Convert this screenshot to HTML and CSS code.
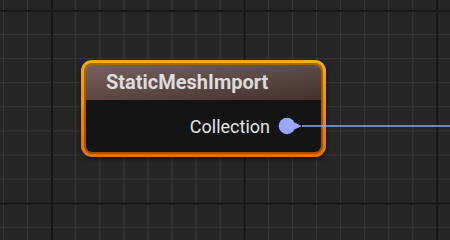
FILE: index.html
```html
<!DOCTYPE html>
<html lang="en">
<head>
    <meta charset="UTF-8">
    <title>StaticMeshImport</title>
    <link rel="stylesheet" href="styles.css">
</head>
<body>

    <div class="graph">

        <!-- Node -->
        <div class="node">
            <div class="node-inner">
                <div class="node-title">StaticMeshImport</div>
                <div class="node-body">
                    <div class="pin-row">
                        <span class="pin-label">Collection</span>
                        <svg class="pin" width="24" height="18" viewBox="0 0 24 18">
                            <circle cx="9" cy="9" r="8.3" fill="#9ba6ff"/>
                            <path d="M16.5 5.5 L23.5 9 L16.5 12.5 Z" fill="#9ba6ff"/>
                        </svg>
                    </div>
                </div>
            </div>
        </div>

        <!-- Wire going out of the Collection pin -->
        <svg class="wire" width="148" height="4" viewBox="0 0 148 4">
            <line x1="0" y1="2" x2="148" y2="2" stroke="#8eaae6" stroke-width="1.6"/>
        </svg>

    </div>

</body>
</html>
```

FILE: styles.css
```css
        body {
            margin: 0;
            padding: 0;
            font-family: Roboto, "Liberation Sans", sans-serif;
        }

        /* Graph canvas with minor and major grid lines */
        .graph {
            position: relative;
            width: 450px;
            height: 240px;
            overflow: hidden;
            background-color: #262626;
            background-image:
                linear-gradient(to right, #161616 2px, transparent 2px),
                linear-gradient(to bottom, #161616 2px, transparent 2px),
                linear-gradient(to right, #38383a 1px, transparent 1px),
                linear-gradient(to bottom, #38383a 1px, transparent 1px);
            background-size: 192.6px 192.6px, 192.6px 192.6px, 24.08px 24.08px, 24.08px 24.08px;
            background-position: 51px 0, 0 10px, 3px 0, 0 10px;
        }

        .node {
            position: absolute;
            left: 81px;
            top: 60px;
            width: 245px;
            padding: 5px;
            box-sizing: border-box;
            border-radius: 11px;
            background: linear-gradient(#f4b00a, #ec8c08 55%, #e07406);
            box-shadow: 0 2px 5px rgba(0, 0, 0, 0.55);
        }

        .node-inner {
            border-radius: 6px;
            box-shadow: 0 0 0 2px rgba(130, 60, 0, 0.65);
            overflow: hidden;
        }

        .node-title {
            height: 35px;
            line-height: 34px;
            padding-left: 20px;
            font-size: 20px;
            font-weight: bold;
            color: #dcdcdc;
            background:
                linear-gradient(rgba(255, 255, 255, 0.1), rgba(0, 0, 0, 0.1)),
                linear-gradient(to right, #684f4c, #4a3734);
        }

        .node-body {
            height: 52px;
            background-color: #141414;
            display: flex;
            align-items: center;
            justify-content: flex-end;
        }

        .pin-row {
            display: flex;
            align-items: center;
            gap: 8px;
            padding-right: 19px;
        }

        .pin-label {
            font-size: 18px;
            color: #e4e4e4;
        }

        .pin {
            display: block;
        }

        .wire {
            position: absolute;
            left: 302px;
            top: 124px;
        }
```
